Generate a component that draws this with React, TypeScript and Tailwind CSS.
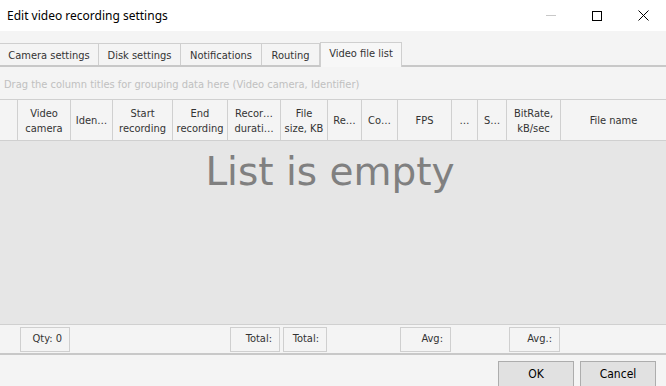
import React from "react";

const cols = [
  { w: "w-[18px]", label: "" },
  { w: "w-[53px]", label: "Video\ncamera" },
  { w: "w-[42px]", label: "Iden…" },
  { w: "w-[60px]", label: "Start\nrecording" },
  { w: "w-[55px]", label: "End\nrecording" },
  { w: "w-[53px]", label: "Recor…\ndurati…" },
  { w: "w-[47px]", label: "File\nsize, KB" },
  { w: "w-[34px]", label: "Re…" },
  { w: "w-[36px]", label: "Co…" },
  { w: "w-[54px]", label: "FPS" },
  { w: "w-[26px]", label: "…" },
  { w: "w-[29px]", label: "S…" },
  { w: "w-[54px]", label: "BitRate,\nkB/sec" },
  { w: "flex-1", label: "File name" },
];

// footer summary cell per column (null = empty)
const totals: (string | null)[] = [
  null, "Qty: 0", null, null, null, "Total:", "Total:", null, null, "Avg:", null, null, "Avg.:", null,
];

const tabs = ["Camera settings", "Disk settings", "Notifications", "Routing", "Video file list"];
const tabW = ["w-[99px]", "w-[82px]", "w-[81px]", "w-[58px]", "w-[82px]"];

const font = "font-['DejaVu_Sans_Condensed','Liberation_Sans',sans-serif]";

export default function App() {
  return (
    <div className={`w-[666px] h-[386px] bg-[#f4f4f4] flex flex-col overflow-hidden text-[11px] text-[#333333] ${font}`}>
      {/* title bar */}
      <div className="h-[31px] bg-white flex items-center shrink-0">
        <span className="pl-[7px] text-[12px] text-black font-['Noto_Sans','Liberation_Sans',sans-serif]">
          Edit video recording settings
        </span>
        <div className="ml-auto flex items-center h-full">
          <div className="w-[46px] flex justify-center">
            <div className="w-[10px] h-px bg-[#c8c8c8]" />
          </div>
          <div className="w-[46px] flex justify-center">
            <div className="w-[10px] h-[10px] border border-black" />
          </div>
          <div className="w-[46px] flex justify-center">
            <svg width="11" height="11" viewBox="0 0 11 11">
              <path d="M0.5 0.5 L10.5 10.5 M10.5 0.5 L0.5 10.5" stroke="#000" strokeWidth="1" />
            </svg>
          </div>
        </div>
      </div>

      {/* tabs */}
      <div className="h-[13px] shrink-0" />
      <div className="relative h-[23px] flex items-end shrink-0 border-b-2 border-[#c8c8c8]">
        {tabs.map((t, i) =>
          i === 4 ? (
            <div
              key={t}
              className={`${tabW[i]} h-[25px] -mb-[2px] flex items-center justify-center border border-b-0 border-[#cfcfcf] bg-[#f7f7f7] text-[#333333] pb-[2px]`}
            >
              {t}
            </div>
          ) : (
            <div
              key={t}
              className={`${tabW[i]} h-[22px] flex items-center justify-center border-t border-r border-[#cfcfcf] text-[#333333] pt-[3px]`}
            >
              {t}
            </div>
          )
        )}
      </div>

      {/* group panel */}
      <div className="h-[32px] shrink-0 flex items-center pl-[4px] pt-[4px] text-[#c0c0c0]">
        Drag the column titles for grouping data here (Video camera, Identifier)
      </div>

      {/* header */}
      <div className="h-[42px] shrink-0 flex border-t border-b border-[#d0d0d0]">
        {cols.map((c, i) => (
          <div
            key={i}
            className={`${c.w} shrink-0 h-full flex items-center justify-center text-center leading-[15px] whitespace-pre pt-[1px] ${
              i < cols.length - 1 ? "border-r border-[#d0d0d0]" : ""
            }`}
          >
            {c.label}
          </div>
        ))}
      </div>

      {/* body */}
      <div className="flex-1 bg-[#e6e6e6] flex justify-center">
        <span className="mt-[5px] -ml-[6px] text-[39px] leading-[52px] text-[#808080] font-['DejaVu_Sans','Liberation_Sans',sans-serif]">
          List is empty
        </span>
      </div>

      {/* footer summary */}
      <div className="h-[31px] shrink-0 flex border-t border-[#d0d0d0] bg-[#f4f4f4] border-b-2 border-b-[#c8c8c8]">
        {cols.map((c, i) => (
          <div key={i} className={`${c.w} shrink-0 h-full flex items-center pl-[2px] pr-[1px]`}>
            {totals[i] && (
              <div className="w-full h-[25px] border border-[#cfcfcf] flex items-center justify-end pr-[7px] pt-[1px]">
                {totals[i]}
              </div>
            )}
          </div>
        ))}
      </div>

      {/* buttons */}
      <div className="h-[31px] shrink-0 flex items-start justify-end pt-[6px] pr-[10px] gap-[6px]">
        <button className="w-[76px] h-[26px] bg-[#e1e1e1] border border-[#adadad] text-[12px] text-black">
          OK
        </button>
        <button className="w-[76px] h-[26px] bg-[#e1e1e1] border border-[#adadad] text-[12px] text-black">
          Cancel
        </button>
      </div>
    </div>
  );
}
